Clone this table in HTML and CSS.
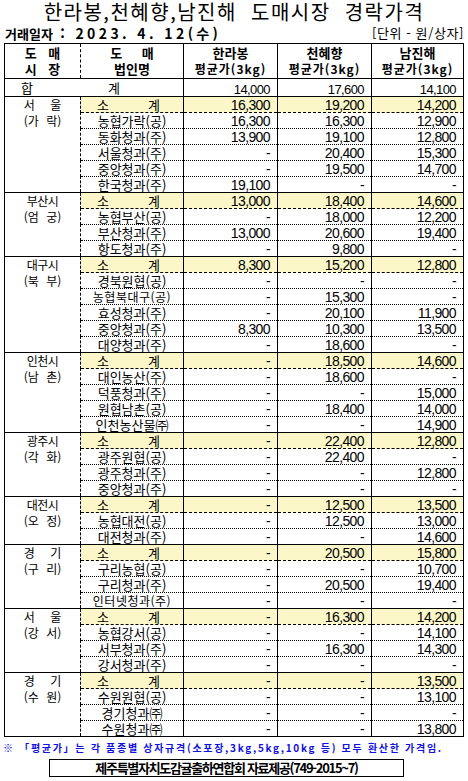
FILE: index.html
```html
<!DOCTYPE html>
<html lang="ko">
<head>
<meta charset="utf-8">
<title>한라봉,천혜향,남진해 도매시장 경락가격</title>
<link rel="stylesheet" href="styles.css">
</head>
<body>
<div class="page">
  <h1 class="title">한라봉,천혜향,남진해 도매시장 경락가격</h1>
  <div class="meta">
    <div class="date"><span class="date-label">거래일자</span> : 2023. 4. 12(수)</div>
    <div class="unit">[단위 - 원/상자]</div>
  </div>
  <table class="prices">
    <colgroup>
      <col class="c-market"><col class="c-corp"><col class="c-num"><col class="c-num"><col class="c-num-last">
    </colgroup>
    <thead>
      <tr>
        <th class="h-market"><div class="spread">도 매</div><div class="spread">시 장</div></th>
        <th class="h-corp"><div class="spread2">도 매</div><div>법인명</div></th>
        <th class="h-num"><div>한라봉</div><div class="h-sub">평균가(3kg)</div></th>
        <th class="h-num"><div>천혜향</div><div class="h-sub">평균가(3kg)</div></th>
        <th class="h-num"><div>남진해</div><div class="h-sub">평균가(3kg)</div></th>
      </tr>
    </thead>
    <tbody>
      <tr class="total">
        <td colspan="2" class="total-label"><div class="pair pair-total"><span>합</span><span>계</span></div></td>
        <td class="num">14,000</td><td class="num">17,600</td><td class="num">14,100</td>
      </tr>
      <tr class="sub">
        <td rowspan="6" class="market"><div class="m1">서 울</div><div class="m2">(가 락)</div></td>
        <td class="corp"><div class="pair"><span>소</span><span>계</span></div></td>
        <td class="num">16,300</td><td class="num">19,200</td><td class="num">14,200</td>
      </tr>
      <tr><td class="corp">농협가락(공)</td><td class="num">16,300</td><td class="num">16,300</td><td class="num">12,900</td></tr>
      <tr><td class="corp">동화청과(주)</td><td class="num">13,900</td><td class="num">19,100</td><td class="num">12,800</td></tr>
      <tr><td class="corp">서울청과(주)</td><td class="num">-</td><td class="num">20,400</td><td class="num">15,300</td></tr>
      <tr><td class="corp">중앙청과(주)</td><td class="num">-</td><td class="num">19,500</td><td class="num">14,700</td></tr>
      <tr><td class="corp">한국청과(주)</td><td class="num">19,100</td><td class="num">-</td><td class="num">-</td></tr>

      <tr class="sub">
        <td rowspan="4" class="market"><div class="m1 tight">부산시</div><div class="m2">(엄 궁)</div></td>
        <td class="corp"><div class="pair"><span>소</span><span>계</span></div></td>
        <td class="num">13,000</td><td class="num">18,400</td><td class="num">14,600</td>
      </tr>
      <tr><td class="corp">농협부산(공)</td><td class="num">-</td><td class="num">18,000</td><td class="num">12,200</td></tr>
      <tr><td class="corp">부산청과(주)</td><td class="num">13,000</td><td class="num">20,600</td><td class="num">19,400</td></tr>
      <tr><td class="corp">항도청과(주)</td><td class="num">-</td><td class="num">9,800</td><td class="num">-</td></tr>

      <tr class="sub">
        <td rowspan="6" class="market"><div class="m1 tight">대구시</div><div class="m2">(북 부)</div></td>
        <td class="corp"><div class="pair"><span>소</span><span>계</span></div></td>
        <td class="num">8,300</td><td class="num">15,200</td><td class="num">12,800</td>
      </tr>
      <tr><td class="corp">경북원협(공)</td><td class="num">-</td><td class="num">-</td><td class="num">-</td></tr>
      <tr><td class="corp small">농협북대구(공)</td><td class="num">-</td><td class="num">15,300</td><td class="num">-</td></tr>
      <tr><td class="corp">효성청과(주)</td><td class="num">-</td><td class="num">20,100</td><td class="num">11,900</td></tr>
      <tr><td class="corp">중앙청과(주)</td><td class="num">8,300</td><td class="num">10,300</td><td class="num">13,500</td></tr>
      <tr><td class="corp">대양청과(주)</td><td class="num">-</td><td class="num">18,600</td><td class="num">-</td></tr>

      <tr class="sub">
        <td rowspan="5" class="market"><div class="m1 tight">인천시</div><div class="m2">(남 촌)</div></td>
        <td class="corp"><div class="pair"><span>소</span><span>계</span></div></td>
        <td class="num">-</td><td class="num">18,500</td><td class="num">14,600</td>
      </tr>
      <tr><td class="corp">대인농산(주)</td><td class="num">-</td><td class="num">18,600</td><td class="num">-</td></tr>
      <tr><td class="corp">덕풍청과(주)</td><td class="num">-</td><td class="num">-</td><td class="num">15,000</td></tr>
      <tr><td class="corp">원협남촌(공)</td><td class="num">-</td><td class="num">18,400</td><td class="num">14,000</td></tr>
      <tr><td class="corp">인천농산물㈜</td><td class="num">-</td><td class="num">-</td><td class="num">14,900</td></tr>

      <tr class="sub">
        <td rowspan="4" class="market"><div class="m1 tight">광주시</div><div class="m2">(각 화)</div></td>
        <td class="corp"><div class="pair"><span>소</span><span>계</span></div></td>
        <td class="num">-</td><td class="num">22,400</td><td class="num">12,800</td>
      </tr>
      <tr><td class="corp">광주원협(공)</td><td class="num">-</td><td class="num">22,400</td><td class="num">-</td></tr>
      <tr><td class="corp">광주청과(주)</td><td class="num">-</td><td class="num">-</td><td class="num">12,800</td></tr>
      <tr><td class="corp">중앙청과(주)</td><td class="num">-</td><td class="num">-</td><td class="num">-</td></tr>

      <tr class="sub">
        <td rowspan="3" class="market"><div class="m1 tight">대전시</div><div class="m2">(오 정)</div></td>
        <td class="corp"><div class="pair"><span>소</span><span>계</span></div></td>
        <td class="num">-</td><td class="num">12,500</td><td class="num">13,500</td>
      </tr>
      <tr><td class="corp">농협대전(공)</td><td class="num">-</td><td class="num">12,500</td><td class="num">13,000</td></tr>
      <tr><td class="corp">대전청과(주)</td><td class="num">-</td><td class="num">-</td><td class="num">14,600</td></tr>

      <tr class="sub">
        <td rowspan="4" class="market"><div class="m1">경 기</div><div class="m2">(구 리)</div></td>
        <td class="corp"><div class="pair"><span>소</span><span>계</span></div></td>
        <td class="num">-</td><td class="num">20,500</td><td class="num">15,800</td>
      </tr>
      <tr><td class="corp">구리농협(공)</td><td class="num">-</td><td class="num">-</td><td class="num">10,700</td></tr>
      <tr><td class="corp">구리청과(주)</td><td class="num">-</td><td class="num">20,500</td><td class="num">19,400</td></tr>
      <tr><td class="corp small">인터넷청과(주)</td><td class="num">-</td><td class="num">-</td><td class="num">-</td></tr>

      <tr class="sub">
        <td rowspan="4" class="market"><div class="m1">서 울</div><div class="m2">(강 서)</div></td>
        <td class="corp"><div class="pair"><span>소</span><span>계</span></div></td>
        <td class="num">-</td><td class="num">16,300</td><td class="num">14,200</td>
      </tr>
      <tr><td class="corp">농협강서(공)</td><td class="num">-</td><td class="num">-</td><td class="num">14,100</td></tr>
      <tr><td class="corp">서부청과(주)</td><td class="num">-</td><td class="num">16,300</td><td class="num">14,300</td></tr>
      <tr><td class="corp">강서청과(주)</td><td class="num">-</td><td class="num">-</td><td class="num">-</td></tr>

      <tr class="sub">
        <td rowspan="4" class="market"><div class="m1">경 기</div><div class="m2">(수 원)</div></td>
        <td class="corp"><div class="pair"><span>소</span><span>계</span></div></td>
        <td class="num">-</td><td class="num">-</td><td class="num">13,500</td>
      </tr>
      <tr><td class="corp">수원원협(공)</td><td class="num">-</td><td class="num">-</td><td class="num">13,100</td></tr>
      <tr><td class="corp">경기청과㈜</td><td class="num">-</td><td class="num">-</td><td class="num">-</td></tr>
      <tr><td class="corp">수원청과㈜</td><td class="num">-</td><td class="num">-</td><td class="num">13,800</td></tr>
    </tbody>
  </table>
  <p class="note">※ 「평균가」는 각 품종별 상자규격(소포장,3kg,5kg,10kg 등) 모두 환산한 가격임.</p>
  <div class="source-wrap"><div class="source">제주특별자치도감귤출하연합회 자료제공(749-2015~7)</div></div>
</div>
</body>
</html>
```

FILE: styles.css
```css
html, body {
  margin: 0;
  padding: 0;
  background: #fff;
}
body {
  font-family: "Noto Sans CJK KR", "Noto Sans", sans-serif;
  color: #000;
}
.page {
  width: 468px;
}
.title {
  margin: 0;
  height: 24px;
  font-size: 20px;
  line-height: 24px;
  font-weight: 400;
  text-align: center;
  letter-spacing: 1.5px;
  word-spacing: 7px;
  white-space: nowrap;
}
.meta {
  display: flex;
  justify-content: space-between;
  align-items: center;
  height: 18px;
  margin-bottom: 1px;
  padding: 0 4px 0 5px;
}
.date {
  font-size: 14px;
  font-weight: 700;
  line-height: 18px;
  letter-spacing: 3.4px;
}
.date-label {
  letter-spacing: 0;
  font-size: 13px;
}
.unit {
  font-size: 13px;
  line-height: 18px;
  letter-spacing: 0.6px;
}
.prices {
  border-collapse: collapse;
  table-layout: fixed;
  width: 460px;
  margin-left: 4px;
  border: 1px solid #000;
}
.c-market { width: 76px; }
.c-corp { width: 103px; }
.c-num { width: 94px; }
.c-num-last { width: 92px; }

.prices th {
  height: 34px;
  padding: 0;
  font-size: 13px;
  font-weight: 700;
  line-height: 16px;
  text-align: center;
  vertical-align: middle;
  border-bottom: 1px solid #000;
}
.h-market { border-right: 1px dashed #000; }
.h-num { border-left: 1px solid #000; }
.spread { word-spacing: 8px; }
.spread2 { word-spacing: 16px; }
.h-sub {
  font-size: 12px;
  letter-spacing: 1px;
}

.prices td {
  padding: 0;
  height: 14.925px;
  border-top: 1px dotted #000;
  white-space: nowrap;
}
.total td {
  height: 17px;
  border-top: 1px solid #000;
  font-size: 13px;
}
.pair {
  display: flex;
  justify-content: space-between;
  padding: 0 23px 0 16px;
  line-height: 15px;
}
.pair-total {
  padding: 0 63px 0 16px;
  line-height: 17px;
}
.num {
  font-family: "Liberation Sans", Arial, sans-serif;
  font-size: 14px;
  letter-spacing: -0.6px;
  line-height: 13px;
  text-align: right;
  vertical-align: bottom;
  padding-right: 7px !important;
  border-left: 1px solid #000;
}
.corp {
  font-size: 13px;
  line-height: 15px;
  text-align: center;
  vertical-align: bottom;
  border-left: 1px dashed #000;
}
.corp.small {
  font-size: 12px;
  letter-spacing: 0.5px;
}
.market {
  font-size: 12px;
  line-height: 15.9px;
  text-align: center;
  vertical-align: top;
  border-top: 1px solid #000 !important;
  border-right: 1px dashed #000;
}
.m1 { word-spacing: 12px; }
.m1.tight { word-spacing: 0; letter-spacing: -0.5px; }
.m2 { word-spacing: 4px; }

.sub td {
  border-top: 1px solid #000;
  border-bottom: 1px dashed #000;
  background: #fbf7c9;
}
.sub td.market {
  background: #fff;
  border-bottom: 1px solid #000;
}

.note {
  margin: 4px 0 0 3px;
  font-size: 10px;
  line-height: 14px;
  font-weight: 700;
  color: #1010e0;
  letter-spacing: 1.7px;
  white-space: nowrap;
}
.source-wrap {
  display: flex;
  padding-left: 49px;
  margin-top: 4px;
}
.source {
  width: 353px;
  height: 16px;
  border: 1px solid #000;
  font-size: 13px;
  line-height: 16px;
  font-weight: 700;
  letter-spacing: -1.3px;
  text-align: center;
}
```
